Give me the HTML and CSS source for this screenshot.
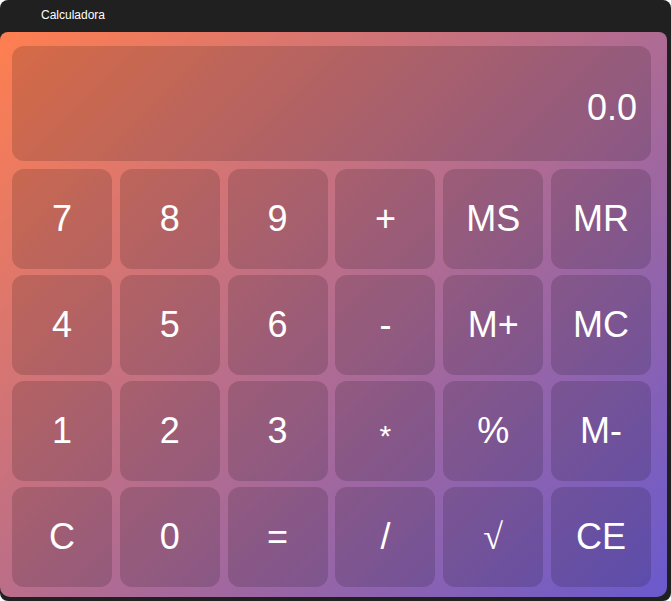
FILE: index.html
```html
<!DOCTYPE html>
<html lang="es">
<head>
<meta charset="utf-8">
<title>Calculadora</title>
<link rel="stylesheet" href="styles.css">
</head>
<body>
<div class="window">
  <div class="titlebar"><span class="title">Calculadora</span></div>
  <div class="panel">
    <div class="display"><span class="value">0.0</span></div>
    <div class="keys">
      <button class="key">7</button>
      <button class="key">8</button>
      <button class="key">9</button>
      <button class="key">+</button>
      <button class="key">MS</button>
      <button class="key">MR</button>
      <button class="key">4</button>
      <button class="key">5</button>
      <button class="key">6</button>
      <button class="key">-</button>
      <button class="key">M+</button>
      <button class="key">MC</button>
      <button class="key">1</button>
      <button class="key">2</button>
      <button class="key">3</button>
      <button class="key key-star">*</button>
      <button class="key">%</button>
      <button class="key">M-</button>
      <button class="key">C</button>
      <button class="key">0</button>
      <button class="key">=</button>
      <button class="key">/</button>
      <button class="key key-root">√</button>
      <button class="key">CE</button>
    </div>
  </div>
</div>
</body>
</html>
```
FILE: styles.css
```css
* { box-sizing: border-box; }
html, body { margin: 0; padding: 0; background: #ffffff; }
body { width: 671px; height: 601px; overflow: hidden; font-family: "Liberation Sans", Arial, sans-serif; }
.window {
  width: 671px;
  height: 601px;
  background: #202020;
  border-radius: 8px;
  display: flex;
  flex-direction: column;
}
.titlebar {
  height: 32px;
  display: flex;
  align-items: center;
  padding-left: 41px;
  padding-bottom: 2px;
}
.title { color: #ffffff; font-size: 12px; }
.panel {
  width: 667px;
  height: 565px;
  border-radius: 8px 8px 10px 10px;
  background: linear-gradient(135deg, #ff7f50 0%, #6a5acd 100%);
  padding: 14px 16px 10px 12px;
  display: flex;
  flex-direction: column;
  gap: 8px;
}
.display {
  height: 115px;
  border-radius: 12px;
  background: rgba(0, 0, 0, 0.15);
  display: flex;
  align-items: center;
  justify-content: flex-end;
  padding: 8px 14px 0 0;
}
.value { color: #fff; font-size: 36px; line-height: 1; }
.keys {
  display: grid;
  grid-template-columns: repeat(6, 100px);
  grid-template-rows: repeat(4, 100px);
  justify-content: space-between;
  row-gap: 6px;
}
.key {
  border: none;
  margin: 0;
  padding: 0;
  border-radius: 12px;
  background: rgba(0, 0, 0, 0.15);
  color: #fff;
  font-family: "Liberation Sans", Arial, sans-serif;
  font-size: 36px;
  line-height: 1;
  display: flex;
  align-items: center;
  justify-content: center;
}
.key-star { padding-top: 9px; font-size: 30px; }
.key-root { font-family: "Liberation Serif", "DejaVu Serif", serif; }
```
